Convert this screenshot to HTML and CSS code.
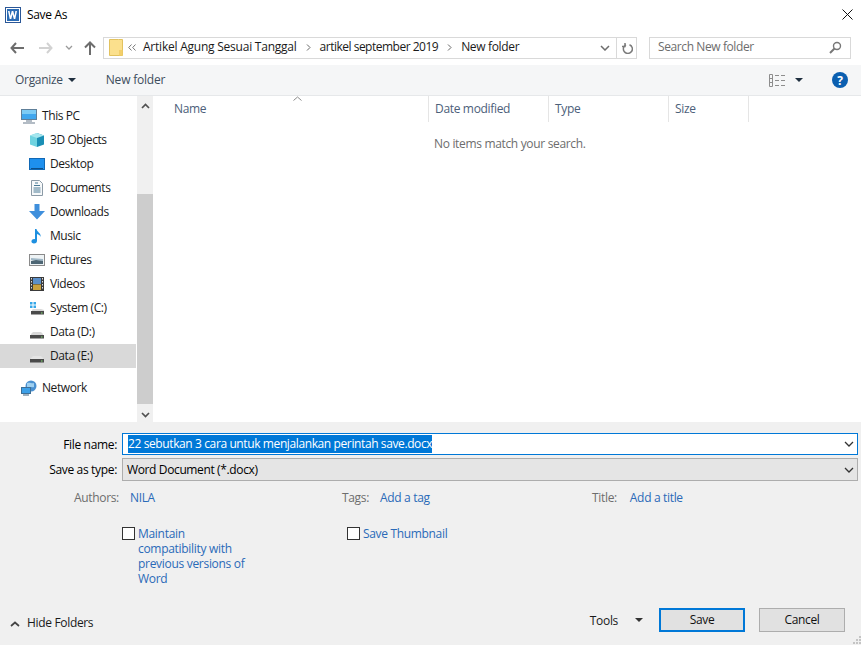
FILE: index.html
```html
<!DOCTYPE html>
<html lang="en">
<head>
<meta charset="utf-8">
<title>Save As</title>
<link rel="stylesheet" href="styles.css">
</head>
<body>
<div class="dialog">
  <header class="titlebar">
    <svg class="word" width="16" height="16" viewBox="0 0 16 16"><rect x="0.5" y="0.5" width="15" height="15" fill="#fff" stroke="#2b5797"/><rect x="2" y="2" width="12" height="12" fill="#2b6cb5"/><path d="M3 4h1.600l.9 5 1.200-5h1.600l1.200 5 .9-5H12l-1.700 8H8.800L7.500 7.200 6.300 12H4.700z" fill="#fff"/></svg>
    <span class="title">Save As</span>
    <svg class="close" width="11" height="11" viewBox="0 0 11 11"><path d="M.5.5l10 10M10.500.5l-10 10" stroke="#111" fill="none"/></svg>
  </header>

  <nav class="navbar">
    <svg class="nav-back" width="14" height="12" viewBox="0 0 14 12"><path d="M6 1L1.500 6 6 11M1.500 6H14" stroke="#6d6d6d" stroke-width="2" fill="none"/></svg>
    <svg class="nav-fwd" width="14" height="12" viewBox="0 0 14 12"><path d="M8 1l4.500 5L8 11M12.500 6H0" stroke="#d2d2d2" stroke-width="2" fill="none"/></svg>
    <svg class="nav-down" width="8" height="5" viewBox="0 0 8 5"><path d="M1 1l3 3 3-3" stroke="#9a9a9a" stroke-width="1.300" fill="none"/></svg>
    <svg class="nav-up" width="12" height="14" viewBox="0 0 12 14"><path d="M1 6.500L6 1.500l5 5M6 1.500V14" stroke="#6d6d6d" stroke-width="2" fill="none"/></svg>
    <div class="address">
      <svg class="folder" width="14" height="17" viewBox="0 0 14 17"><path d="M.5.5h9l0 0h4v16H.5z" fill="#fbe08d" stroke="#e2c25f"/><rect x="10" y="11" width="3.500" height="5.500" fill="#f3cf6b"/></svg>
      <svg class="crumb-more" width="8" height="7" viewBox="0 0 8 7"><path d="M3.500.5L.7 3.500l2.800 3M7.500.5L4.700 3.500l2.800 3" stroke="#777" fill="none"/></svg>
      <span class="crumb first">Artikel Agung Sesuai Tanggal</span>
      <svg class="sep" width="5" height="7" viewBox="0 0 5 7"><path d="M1 .5l3 3-3 3" stroke="#666" fill="none"/></svg>
      <span class="crumb c-sept">artikel september 2019</span>
      <svg class="sep" width="5" height="7" viewBox="0 0 5 7"><path d="M1 .5l3 3-3 3" stroke="#666" fill="none"/></svg>
      <span class="crumb">New folder</span>
      <svg class="addr-chev" width="10" height="6" viewBox="0 0 10 6"><path d="M1 1l4 4 4-4" stroke="#6d6d6d" stroke-width="1.500" fill="none"/></svg>
      <div class="refresh">
        <svg width="12" height="12" viewBox="0 0 12 12"><path d="M4.500 2.300A4.500 4.500 0 1 0 8 2.200M3.500.5v3.500h-3" transform="translate(.5 .5)" stroke="#7a7a7a" stroke-width="1.500" fill="none"/></svg>
      </div>
    </div>
    <div class="search">
      <span class="search-text">Search New folder</span>
      <svg width="13" height="13" viewBox="0 0 13 13"><circle cx="8" cy="5" r="3.500" stroke="#777" stroke-width="1.400" fill="none"/><path d="M5.500 7.500L1 12" stroke="#777" stroke-width="2" fill="none"/></svg>
    </div>
  </nav>

  <div class="toolbar">
    <span class="tool">Organize</span>
    <span class="caret dark organize-caret"></span>
    <span class="tool newfolder">New folder</span>
    <svg class="viewicon" width="17" height="13" viewBox="0 0 17 13"><path d="M.5.500h3v12h-3zM.5 4.500h3M.5 8.500h3M6 1.500h4M12 1.500h4M6 6.500h4M12 6.500h4M6 11.500h4M12 11.500h4" stroke="#8d8d8d" fill="none"/></svg>
    <span class="caret dark view-caret"></span>
    <span class="help">?</span>
  </div>

  <main class="browser">
    <aside class="tree">
      <ul class="tree-list">
        <li class="row top"><svg width="18" height="16" viewBox="0 0 18 16"><rect x="1.500" y="1.500" width="15" height="10" fill="#3fa6ee" stroke="#5f7f99"/><rect x="2" y="2" width="14" height="4" fill="#7ccbf5"/><path d="M6 13h6M3 15h12" stroke="#9aa7b2" stroke-width="1.500"/></svg><span>This PC</span></li>
        <li class="row"><svg width="16" height="16" viewBox="0 0 16 16"><path d="M8 1l7 2.500v9L8 15z" fill="#1a8fb5"/><path d="M8 1L1 3.500v9L8 15z" fill="#6fd3e0"/><path d="M1 3.500L8 6l7-2.500L8 1z" fill="#a4e6ee"/></svg><span>3D Objects</span></li>
        <li class="row"><svg width="16" height="14" viewBox="0 0 16 14"><rect x=".5" y="1.500" width="15" height="11" fill="#1e90ee" stroke="#1168b5"/><path d="M2 11.500h12" stroke="#0c4f8a"/></svg><span>Desktop</span></li>
        <li class="row"><svg width="16" height="16" viewBox="0 0 16 16"><path d="M2.500.5h8l3 3v12h-11z" fill="#f7f9fa" stroke="#8b9aa6"/><path d="M6 3h3M5 5.500h6M4.500 8h7M4.500 10h7M4.500 12h7" stroke="#4a7a96"/></svg><span>Documents</span></li>
        <li class="row"><svg width="16" height="16" viewBox="0 0 16 16"><path d="M5.500 0h5v7H16l-8 8.500L0 7h5.500z" fill="#3f8fdc"/></svg><span>Downloads</span></li>
        <li class="row"><svg width="16" height="16" viewBox="0 0 16 16"><path d="M6 1h1.500c.3 3 5 4 4 8-.5-2-2-2.500-3.500-3v7c0 1.700-1.500 2.500-3 2.500S2 14.500 2.500 13 4.500 10.700 6 11.300z" fill="#1e90e0"/></svg><span>Music</span></li>
        <li class="row"><svg width="16" height="14" viewBox="0 0 16 14"><rect x=".5" y="1.500" width="15" height="11" fill="#eef3f5" stroke="#8a8a8a"/><path d="M2 5l12 1v2L2 7z" fill="#9fb7c6"/><path d="M2 8l5-1 7 1v3H2z" fill="#4d6674"/></svg><span>Pictures</span></li>
        <li class="row"><svg width="16" height="16" viewBox="0 0 16 16"><rect x="1" y="1" width="14" height="14" fill="#3a3a3a"/><rect x="4" y="2" width="8" height="6" fill="#5b8fc9"/><rect x="4" y="8.500" width="8" height="5.500" fill="#c9a13f"/><path d="M2.500 2v12M13.500 2v12" stroke="#ddd" stroke-dasharray="1.500 1.500"/></svg><span>Videos</span></li>
        <li class="row"><svg width="16" height="16" viewBox="0 0 16 16"><path d="M1 2h2.500v2.500H1zM4.500 2H7v2.500H4.500zM1 5.500h2.500V8H1zM4.500 5.500H7V8H4.500z" fill="#36a7e8"/><path d="M3 10l1-1h8l3 1v1H3z" fill="#d9d9d9"/><rect x="2" y="11" width="13" height="3.500" fill="#4a4a4a"/><rect x="12" y="12.500" width="1.500" height="1" fill="#7fdc6f"/></svg><span>System (C:)</span></li>
        <li class="row"><svg width="16" height="16" viewBox="0 0 16 16"><path d="M2 10l2-2h8l2 2v1H2z" fill="#d9d9d9"/><rect x="1" y="11" width="14" height="3.500" fill="#4a4a4a"/><rect x="12" y="12.500" width="1.500" height="1" fill="#7fdc6f"/></svg><span>Data (D:)</span></li>
        <li class="row selected"><svg width="16" height="16" viewBox="0 0 16 16"><path d="M2 10l2-2h8l2 2v1H2z" fill="#e4e4e4"/><rect x="1" y="11" width="14" height="3.500" fill="#4a4a4a"/><rect x="12" y="12.500" width="1.500" height="1" fill="#7fdc6f"/></svg><span>Data (E:)</span></li>
        <li class="row top network"><svg width="18" height="16" viewBox="0 0 18 16"><circle cx="11" cy="6" r="5.500" fill="#4a90d0"/><path d="M7 3c3-1 5 1 7 0v4c-2 1-5-1-7 1z" fill="#9fd0f0"/><rect x="1.500" y="7.500" width="9" height="6" fill="#3ca0e8" stroke="#3d6f97"/><path d="M3 15h6" stroke="#7f97aa" stroke-width="1.500"/></svg><span>Network</span></li>
      </ul>
    </aside>
    <div class="scrollbar">
      <svg class="sb-btn" width="9" height="6" viewBox="0 0 9 6"><path d="M1 5l3.500-3.500L8 5" stroke="#505050" stroke-width="1.700" fill="none"/></svg>
      <div class="sb-track"><div class="sb-thumb"></div></div>
      <svg class="sb-btn" width="9" height="6" viewBox="0 0 9 6"><path d="M1 1l3.500 3.500L8 1" stroke="#505050" stroke-width="1.700" fill="none"/></svg>
    </div>
    <section class="files">
      <div class="columns">
        <div class="col col-name"><span>Name</span><svg class="sort" width="9" height="5" viewBox="0 0 9 5"><path d="M.5 4.500l4-3.500 4 3.500" stroke="#8a8a8a" fill="none"/></svg></div>
        <div class="col col-mid"><span>Date modified</span></div>
        <div class="col col-mid"><span>Type</span></div>
        <div class="col col-size"><span>Size</span></div>
      </div>
      <p class="empty">No items match your search.</p>
    </section>
  </main>

  <footer class="panel">
    <div class="field">
      <label class="label">File name:</label>
      <div class="input">
        <span class="selection">22 sebutkan 3 cara untuk menjalankan perintah save.docx</span>
        <svg class="chev" width="10" height="6" viewBox="0 0 10 6"><path d="M1 1l4 4 4-4" stroke="#333" stroke-width="1.300" fill="none"/></svg>
      </div>
    </div>
    <div class="field second">
      <label class="label">Save as type:</label>
      <div class="select">
        <span>Word Document (*.docx)</span>
        <svg class="chev" width="10" height="6" viewBox="0 0 10 6"><path d="M1 1l4 4 4-4" stroke="#333" stroke-width="1.300" fill="none"/></svg>
      </div>
    </div>
    <div class="meta">
      <div class="meta-item m-authors"><span class="meta-label">Authors:</span><a class="link">NILA</a></div>
      <div class="meta-item m-tags"><span class="meta-label">Tags:</span><a class="link">Add a tag</a></div>
      <div class="meta-item m-title"><span class="meta-label">Title:</span><a class="link">Add a title</a></div>
    </div>
    <div class="checks">
      <div class="check c-compat"><span class="box"></span><span class="link">Maintain compatibility with previous versions of Word</span></div>
      <div class="check c-thumb"><span class="box"></span><span class="link">Save Thumbnail</span></div>
    </div>
    <div class="actions">
      <div class="hide">
        <svg width="10" height="6" viewBox="0 0 10 6"><path d="M1 5l4-3.500L9 5" stroke="#444" stroke-width="1.700" fill="none"/></svg>
        <span>Hide Folders</span>
      </div>
      <div class="tools"><span>Tools</span><span class="caret small"></span></div>
      <button class="btn primary">Save</button>
      <button class="btn">Cancel</button>
    </div>
    <svg class="grip" width="9" height="9" viewBox="0 0 9 9"><path d="M7 0h2v2H7zM4 3h2v2H4zM7 3h2v2H7zM1 6h2v2H1zM4 6h2v2H4zM7 6h2v2H7z" fill="#c4c4c4"/></svg>
  </footer>
</div>
</body>
</html>
```
FILE: styles.css
```css
* { box-sizing: border-box; }
html, body { margin: 0; padding: 0; }
body {
  width: 861px; height: 645px; overflow: hidden;
  font-family: "Open Sans", "Noto Sans", sans-serif;
  font-size: 12px; color: #000; background: #fff;
  letter-spacing: -.33px;
}
.dialog { display: flex; flex-direction: column; width: 861px; height: 645px; }

.titlebar { display: flex; align-items: center; height: 30px; padding: 0 8px 0 5px; flex: none; }
.title { margin-left: 6px; margin-bottom: 2px; flex: 1; }
.close { margin-bottom: 2px; }

.navbar { display: flex; align-items: center; height: 35px; padding: 0 10px; flex: none; }
.nav-fwd { margin-left: 15px; }
.nav-down { margin-left: 12px; }
.nav-up { margin-left: 11px; }
.address {
  display: flex; align-items: center; width: 534px; height: 22px;
  margin-left: 7px; padding-left: 5px;
  border: 1px solid #d9d9d9;
}
.crumb-more { margin-left: 5px; flex: none; }
.crumb { margin: 0 9px 2px; color: #1a1a1a; }
.crumb.first { margin-left: 7px; letter-spacing: -.23px; }
.crumb.c-sept { letter-spacing: -.5px; }
.sep { flex: none; }
.addr-chev { margin-left: auto; margin-right: 6px; }
.refresh {
  display: flex; align-items: center; justify-content: center;
  width: 20px; height: 20px; border-left: 1px solid #d9d9d9;
}
.search {
  display: flex; align-items: center; justify-content: space-between;
  width: 202px; height: 22px; margin-left: 12px; padding: 0 8px;
  border: 1px solid #d9d9d9; color: #6d6d6d;
}
.search-text { margin-bottom: 2px; letter-spacing: -.4px; }

.toolbar {
  display: flex; align-items: center; height: 31px; padding: 0 13px 0 15px; flex: none;
  background: #f5f6f7; border-bottom: 1px solid #e6e8ea; color: #3d4d5d;
}
.tool { margin-bottom: 2px; letter-spacing: -.3px; }
.organize-caret { margin-left: 5px; }
.newfolder { margin-left: 30px; letter-spacing: -.2px; }
.viewicon { margin-left: auto; }
.view-caret { margin-left: 9px; margin-right: 29px; }
.caret {
  display: inline-block; width: 0; height: 0;
  border-left: 4px solid transparent; border-right: 4px solid transparent;
  border-top: 4px solid #1f2f3f;
}
.help {
  display: flex; align-items: center; justify-content: center;
  width: 16px; height: 16px; border-radius: 50%;
  background: #0b5fb0; color: #fff; font-weight: 700; font-size: 12px;
}

.browser { display: flex; height: 326px; flex: none; }
.tree { width: 137px; padding-top: 8px; flex: none; }
.tree-list { list-style: none; margin: 0; padding: 0; }
.row { display: flex; align-items: center; height: 24px; padding-left: 29px; gap: 5px; color: #1a1a1a; letter-spacing: -.42px; }
.row span { margin-bottom: 2px; }
.row svg { flex: none; }
.row.top { padding-left: 20px; gap: 4px; }
.row.network { margin-top: 8px; }
.row.selected { background: #d9d9d9; width: 136px; }

.scrollbar {
  display: flex; flex-direction: column; align-items: center;
  width: 16px; background: #f0f0f0; flex: none;
}
.sb-btn { flex: none; margin: 7px 0; }
.sb-track { flex: 1; width: 100%; padding-top: 78px; padding-bottom: 1px; }
.sb-thumb { height: 210px; background: #cdcdcd; }

.files { flex: 1; padding-left: 2px; }
.columns { display: flex; height: 26px; }
.col { display: flex; align-items: center; position: relative; border-right: 1px solid #e5e5e5; padding-left: 6px; color: #4c607a; }
.col span { margin-bottom: 2px; }
.col-name { width: 274px; padding-left: 19px; }
.col-mid { width: 120px; }
.col-size { width: 80px; }
.sort { position: absolute; left: 138px; top: 0; }
.empty { margin: 13px 0 0 279px; color: #6d6d6d; }

.panel { flex: 1; background: #f0f0f0; padding-top: 11px; position: relative; }
.field { display: flex; align-items: center; height: 22px; }
.field.second { margin-top: 3px; height: 23px; }
.label { width: 117px; text-align: right; margin-right: 5px; }
.input {
  display: flex; align-items: center; justify-content: space-between;
  width: 736px; height: 22px; padding: 0 3px 0 5px; background: #fff; border: 1px solid #0078d7;
}
.selection { background: #0078d7; color: #fff; line-height: 18px; letter-spacing: -.39px; }
.select {
  display: flex; align-items: center; justify-content: space-between;
  width: 736px; height: 23px; padding: 0 3px 0 4px; background: #e5e5e5; border: 1px solid #adadad;
  letter-spacing: -.37px;
}
.meta { display: flex; margin-top: 8px; height: 17px; align-items: center; }
.meta-item { display: flex; align-items: center; }
.m-authors { width: 342px; padding-left: 74px; }
.m-tags { width: 250px; }
.meta-label { color: #6d6d6d; margin-right: 11px; }
.m-title .meta-label { margin-right: 13px; }
.link { color: #2a6ab8; }

.checks { display: flex; margin-top: 20px; padding-left: 122px; }
.check { display: flex; align-items: flex-start; gap: 3px; line-height: 15px; }
.c-compat { width: 225px; }
.c-compat .link { width: 110px; letter-spacing: -.3px; }
.box { flex: none; width: 13px; height: 13px; margin-top: 1px; background: #fff; border: 1px solid #333; }

.actions { position: absolute; left: 0; right: 0; bottom: 0; height: 37px; display: flex; align-items: flex-start; }
.hide { display: flex; align-items: center; gap: 7px; height: 23px; margin-left: 10px; margin-top: 4px; color: #1a1a1a; }
.hide span { margin-bottom: 2px; }
.tools { display: flex; align-items: center; gap: 17px; height: 24px; margin-left: auto; color: #1a1a1a; }
.caret.small { border-width: 4px 4px 0; border-top-color: #333; }
.btn {
  width: 86px; height: 24px; margin: 0; padding: 0 0 2px; font: inherit; letter-spacing: inherit; color: #111;
  background: #e1e1e1; border: 1px solid #adadad;
}
.btn.primary { margin-left: 16px; border: 2px solid #0078d7; }
.btn:last-of-type { margin-left: 14px; margin-right: 16px; }
.grip { position: absolute; right: 0; bottom: 0; }
```
